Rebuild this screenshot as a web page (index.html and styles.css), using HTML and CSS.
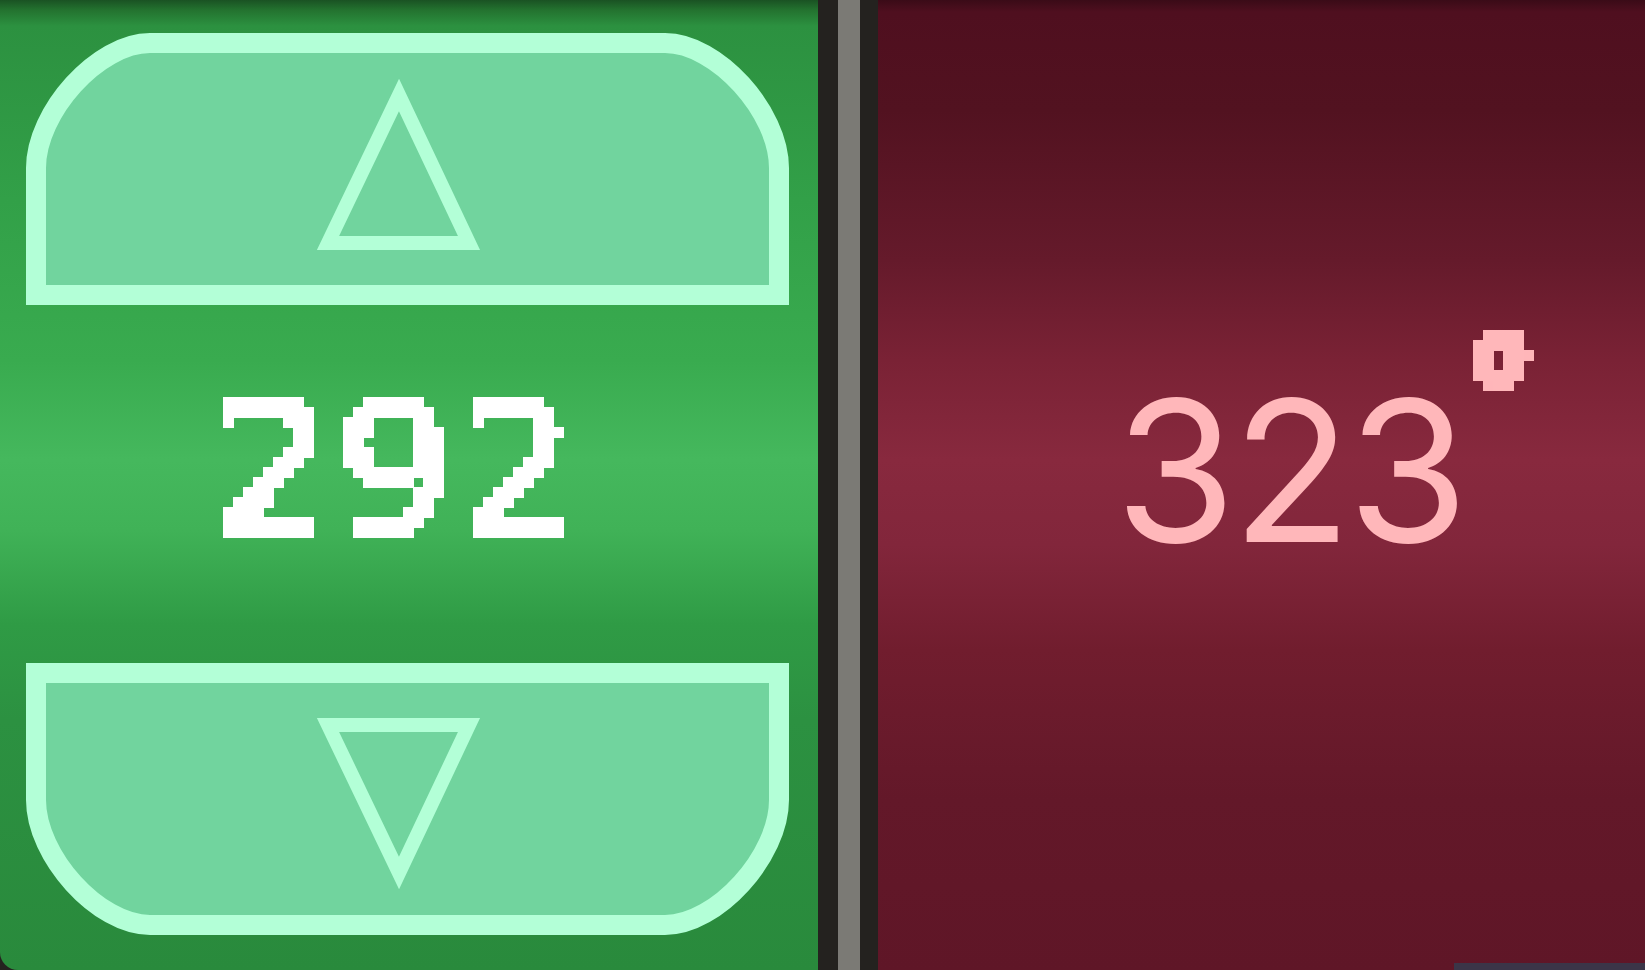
FILE: index.html
```html
<!DOCTYPE html>
<html lang="en">
<head>
<meta charset="utf-8">
<title>Stepper</title>
<link rel="stylesheet" href="styles.css">
</head>
<body>
<svg class="defs" width="0" height="0" aria-hidden="true">
  <filter id="pixelate-num" x="0" y="0" width="1" height="1" color-interpolation-filters="sRGB">
    <feMorphology in="SourceGraphic" operator="dilate" radius="2" result="thick"/>
    <feFlood x="5" y="5" width="1" height="1" flood-color="#000"/>
    <feComposite width="10" height="10"/>
    <feTile result="grid"/>
    <feComposite in="thick" in2="grid" operator="in"/>
    <feComponentTransfer><feFuncA type="discrete" tableValues="0 1"/></feComponentTransfer>
    <feMorphology operator="dilate" radius="5"/>
  </filter>
  <filter id="pixelate-deg" x="0" y="0" width="1" height="1" color-interpolation-filters="sRGB">
    <feMorphology in="SourceGraphic" operator="dilate" radius="4" result="thick"/>
    <feFlood x="5" y="5" width="1" height="1" flood-color="#000"/>
    <feComposite width="10" height="10"/>
    <feTile result="grid"/>
    <feComposite in="thick" in2="grid" operator="in"/>
    <feComponentTransfer><feFuncA type="discrete" tableValues="0 1"/></feComponentTransfer>
    <feMorphology operator="dilate" radius="5"/>
  </filter>
</svg>
<main class="console">
  <section class="stepper">
    <button class="step" type="button" aria-label="Increase">
      <svg class="step-art" viewBox="0 29 818 280" width="818" height="280">
        <path class="step-frame" d="M36,295 L36,168 C36,112 98,43 150,43 L665,43 C717,43 779,112 779,168 L779,295 Z"/>
        <path class="step-arrow" d="M399,95 L469,243 L328,243 Z"/>
      </svg>
    </button>
    <div class="readout"><span class="pixel-num">292</span></div>
    <button class="step step-down" type="button" aria-label="Decrease">
      <svg class="step-art" viewBox="0 29 818 280" width="818" height="280">
        <path class="step-frame" d="M36,295 L36,168 C36,112 98,43 150,43 L665,43 C717,43 779,112 779,168 L779,295 Z"/>
        <path class="step-arrow" d="M399,95 L469,243 L328,243 Z"/>
      </svg>
    </button>
  </section>
  <div class="divider"><div class="rail"></div></div>
  <section class="heading-panel">
    <div class="display">
      <span class="value">323</span><span class="deg">°</span>
    </div>
    <div class="dock"><div class="dock-bar"></div></div>
  </section>
</main>
</body>
</html>
```

FILE: styles.css
```css
* { box-sizing: border-box; }

html, body {
  margin: 0;
  padding: 0;
  width: 1645px;
  height: 970px;
  overflow: hidden;
  background: #24221f;
}

.defs {
  position: absolute;
  width: 0;
  height: 0;
}

.console {
  display: flex;
  width: 1645px;
  height: 970px;
}

/* ---------- left stepper ---------- */
.stepper {
  width: 818px;
  height: 970px;
  display: flex;
  flex-direction: column;
  padding-top: 29px;
  border-bottom-left-radius: 18px;
  background: linear-gradient(to bottom,
    #1a5223 0px,
    #23722f 10px,
    #2c9140 26px,
    #32a048 200px,
    #39ab4f 360px,
    #45b85d 460px,
    #40b257 530px,
    #2f9b45 625px,
    #2c9141 720px,
    #298a3c 970px);
}

.step {
  display: block;
  width: 818px;
  height: 280px;
  padding: 0;
  margin: 0;
  border: 0;
  background: none;
  cursor: pointer;
}

.step-down {
  transform: scaleY(-1);
}

.step-art {
  display: block;
}

.step-frame {
  fill: #71d49e;
  stroke: #b3ffd7;
  stroke-width: 20;
  stroke-linejoin: miter;
}

.step-arrow {
  fill: none;
  stroke: #b3ffd7;
  stroke-width: 14;
  stroke-linejoin: miter;
}

.readout {
  height: 350px;
  display: flex;
  align-items: flex-start;
  padding-top: 68px;
  padding-left: 213px;
}

.pixel-num {
  display: inline-block;
  font-family: "DejaVu Sans", sans-serif;
  font-size: 186px;
  line-height: 186px;
  letter-spacing: 4px;
  color: #ffffff;
  filter: url(#pixelate-num);
}

/* ---------- divider ---------- */
.divider {
  width: 60px;
  height: 970px;
  padding-left: 20px;
  background: #24221f;
}

.rail {
  width: 22px;
  height: 100%;
  background: #7b7a75;
}

/* ---------- right panel ---------- */
.heading-panel {
  flex: 1;
  height: 970px;
  display: flex;
  flex-direction: column;
  background: linear-gradient(to bottom,
    #3a0b17 0px,
    #4f0f1f 12px,
    #521220 110px,
    #651a2b 260px,
    #7a2235 360px,
    #88293e 460px,
    #82263b 545px,
    #711d2e 650px,
    #631829 800px,
    #5f1627 970px);
}

.display {
  flex: 1;
  display: flex;
  align-items: flex-start;
  padding-top: 373px;
  padding-left: 237px;
}

.value {
  font-family: "Inter", "Liberation Sans", sans-serif;
  font-size: 196px;
  line-height: 196px;
  font-weight: 400;
  letter-spacing: -4px;
  color: #ffb7ba;
}

.deg {
  display: inline-block;
  margin-top: -53px;
  margin-left: -2px;
  font-family: "DejaVu Sans", sans-serif;
  font-weight: 700;
  font-size: 150px;
  line-height: 150px;
  color: #ffb7ba;
  filter: url(#pixelate-deg);
}

.dock {
  height: 7px;
  display: flex;
  justify-content: flex-end;
}

.dock-bar {
  width: 191px;
  height: 7px;
  background: #3b3548;
}
```
